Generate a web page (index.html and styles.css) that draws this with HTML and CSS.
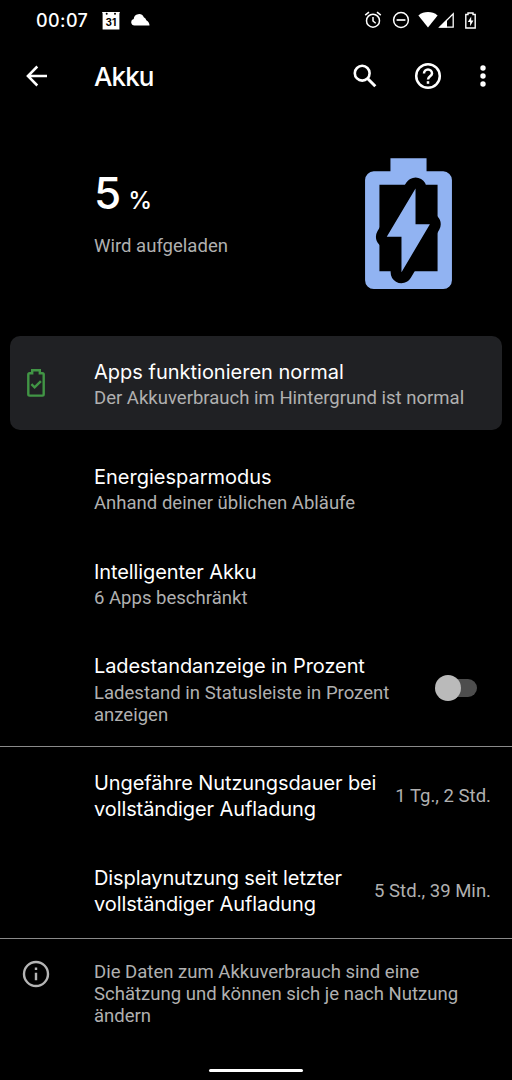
FILE: index.html
```
<!DOCTYPE html>
<html lang="de">
<head>
    <meta charset="UTF-8">
    <title>Akku</title>
    <link rel="stylesheet" href="styles.css">
</head>
<body>
    <div class="screen">
        <div class="status-bar">
            <span class="clock">00:07</span>
            <svg class="calendar-icon" width="18" height="19" viewBox="0 0 18 19">
                <path d="M0 1h18l-.6 1.5V18.5H.6V2.500z" fill="#fff"/>
                <circle cx="4.700" cy="2.700" r="1" fill="#000"/>
                <circle cx="13" cy="2.700" r="1" fill="#000"/>
                <text class="calendar-day" x="9" y="14.600" text-anchor="middle">31</text>
            </svg>
            <svg class="cloud-icon" width="19" height="12" viewBox="0 0 19 12">
                <path d="M3.500 11.500A3.300 3.300 0 0 1 2.700 5 5.300 5.300 0 0 1 12.800 3.200 4 4 0 0 1 15.300 6.200Q18.500 8 18.500 11.500z" fill="#fff"/>
            </svg>
            <div class="status-icons">
                <svg class="alarm-icon" width="18" height="18" viewBox="0 0 18 18" fill="none" stroke="#fff" stroke-width="1.500">
                    <circle cx="9" cy="9.700" r="6.500"/>
                    <path d="M9 6v4l2.700 2.300M1.200 4.200l3.800-3M16.800 4.200l-3.800-3"/>
                </svg>
                <svg class="dnd-icon" width="18" height="18" viewBox="0 0 18 18" fill="none" stroke="#fff" stroke-width="1.500">
                    <circle cx="9" cy="9" r="7.400"/>
                    <path d="M4.600 9h8.800" stroke-width="1.700"/>
                </svg>
                <svg class="wifi-icon" width="20" height="16" viewBox="0 0 20 16">
                    <path d="M.4 3.400C6-1 14-1 19.600 3.400L10 15.600z" fill="#fff"/>
                </svg>
                <svg class="signal-icon" width="16" height="16" viewBox="0 0 16 16">
                    <path d="M1.700 15.200L15.200 1.700V15.200z" fill="none" stroke="#fff" stroke-width="1.300"/>
                    <path d="M1 15.500L9 7.500V15.500z" fill="#fff"/>
                </svg>
                <svg class="charging-icon" width="11" height="17" viewBox="0 0 11 17">
                    <path d="M3 1h5v1.500h2.200V16H.8V2.500H3z" fill="none" stroke="#fff" stroke-width="1.400"/>
                    <path d="M6.200 4.500L2.800 10h2.300v4.200L8.400 8.600H6.200z" fill="#fff"/>
                </svg>
            </div>
        </div>

        <div class="toolbar">
            <svg class="back-icon" width="22" height="22" viewBox="0 0 22 22" fill="none" stroke="#fff" stroke-width="2.500">
                <path d="M21 11H2.500M11.300 1.500L1.900 11l9.400 9.500"/>
            </svg>
            <h1>Akku</h1>
            <svg class="search-icon" width="24" height="24" viewBox="0 0 24 24" fill="none" stroke="#fff" stroke-width="2.600">
                <circle cx="9.200" cy="9.200" r="7.400"/>
                <path d="M14.300 14.300l8 8" stroke-width="3"/>
            </svg>
            <svg class="help-icon" width="28" height="28" viewBox="0 0 28 28" fill="none" stroke="#fff" stroke-width="2.500">
                <circle cx="14" cy="14" r="11.800"/>
                <path d="M10 11.500a4 4 0 0 1 8 0c0 2.700-4 3-4 6"/>
                <path d="M14 19.200v2.600"/>
            </svg>
            <svg class="more-icon" width="6" height="22" viewBox="0 0 6 22" fill="#fff">
                <circle cx="3" cy="3" r="2.700"/>
                <circle cx="3" cy="11" r="2.700"/>
                <circle cx="3" cy="19" r="2.700"/>
            </svg>
        </div>

        <div class="battery-header">
            <div class="battery-info">
                <div class="level">5<span class="percent">%</span></div>
                <div class="charging-state">Wird aufgeladen</div>
            </div>
            <svg class="battery-icon" width="87" height="131" viewBox="46 39 260 392">
                <path d="M122 40h108v39h50a26 26 0 0 1 26 26v300a26 26 0 0 1-26 26H72a26 26 0 0 1-26-26V105a26 26 0 0 1 26-26h50z" fill="#91b3f2"/>
                <path d="M89 119h174v259H89z"/>
                <path d="M197 130v107h43L155 381V275h-44z" stroke="#000" stroke-width="65" stroke-linejoin="round"/>
                <path d="M197 130v107h43L155 381V275h-44z" fill="#91b3f2"/>
            </svg>
        </div>

        <div class="card">
            <div class="row-icon">
                <svg width="18" height="28" viewBox="0 0 18 28" fill="none" stroke="#419545" stroke-width="2.400">
                    <path d="M5.200 1.300h7.600v3h2.600q1.300 0 1.300 1.300v19.700q0 1.300-1.300 1.300H2.600q-1.300 0-1.300-1.300V5.600q0-1.300 1.300-1.300h2.600z"/>
                    <path d="M4.400 15.200l3.200 3.200 6.300-6.300"/>
                </svg>
            </div>
            <div class="row-text">
                <div class="title">Apps funktionieren normal</div>
                <div class="summary">Der Akkuverbrauch im Hintergrund ist normal</div>
            </div>
        </div>

        <div class="row">
            <div class="row-text">
                <div class="title">Energiesparmodus</div>
                <div class="summary">Anhand deiner üblichen Abläufe</div>
            </div>
        </div>
        <div class="row">
            <div class="row-text">
                <div class="title tight">Intelligenter Akku</div>
                <div class="summary">6 Apps beschränkt</div>
            </div>
        </div>
        <div class="row row-switch">
            <div class="row-text">
                <div class="title tight">Ladestandanzeige in Prozent</div>
                <div class="summary">Ladestand in Statusleiste in Prozent<br>anzeigen</div>
            </div>
            <div class="switch"><div class="thumb"></div></div>
        </div>

        <div class="usage">
            <div class="usage-row">
                <div class="title tight">Ungefähre Nutzungsdauer bei<br>vollständiger Aufladung</div>
                <div class="value">1 Tg., 2 Std.</div>
            </div>
            <div class="usage-row">
                <div class="title tight">Displaynutzung seit letzter<br>vollständiger Aufladung</div>
                <div class="value">5 Std., 39 Min.</div>
            </div>
        </div>

        <div class="footer">
            <svg class="info-icon" width="28" height="28" viewBox="0 0 28 28" fill="none" stroke="#b5b5b5" stroke-width="2.400">
                <circle cx="14" cy="14" r="12"/>
                <path d="M14 12.700v7.600M14 7.500v2.600"/>
            </svg>
            <div class="summary">Die Daten zum Akkuverbrauch sind eine<br>Schätzung und können sich je nach Nutzung<br>ändern</div>
        </div>

        <div class="home-bar"></div>
    </div>
</body>
</html>
```
FILE: styles.css
```
* {
    margin: 0;
    padding: 0;
    box-sizing: border-box;
}

body {
    background-color: #000;
    color: #fff;
    font-family: Roboto, sans-serif;
}

svg {
    display: block;
    flex-shrink: 0;
}

.screen {
    width: 512px;
    height: 1080px;
    display: flex;
    flex-direction: column;
    overflow: hidden;
}

/* Status bar */
.status-bar {
    height: 40px;
    padding: 0 36px;
    display: flex;
    align-items: center;
    font-family: Inter, sans-serif;
}

.clock {
    width: 66px;
    font-size: 18px;
    font-weight: 500;
    line-height: 20px;
    letter-spacing: 0.4px;
    padding-top: 2px;
}

.calendar-day {
    font-size: 10px;
    font-weight: 700;
}

.cloud-icon {
    margin-left: 11px;
}

.status-icons {
    display: flex;
    align-items: center;
    margin-left: auto;
}

.dnd-icon {
    margin-left: 10px;
}

.wifi-icon {
    margin-left: 8px;
}

.charging-icon {
    margin-left: 11px;
}

/* Toolbar */
.toolbar {
    height: 72px;
    padding: 0 26px;
    display: flex;
    align-items: center;
}

.toolbar h1 {
    margin-left: 46px;
    margin-right: auto;
    padding-top: 2px;
    font-family: Inter, sans-serif;
    font-size: 26px;
    font-weight: 500;
    line-height: 32px;
    letter-spacing: -0.9px;
}

.help-icon {
    margin: 0 38px 0 37px;
}

/* Battery level */
.battery-header {
    height: 224px;
    padding: 46px 60px 0 94px;
    display: flex;
    justify-content: space-between;
}

.battery-info {
    padding-top: 8px;
}

.level {
    font-family: Inter, sans-serif;
    font-size: 44px;
    font-weight: 500;
    line-height: 54px;
}

.percent {
    margin-left: 7px;
    font-size: 24px;
}

.charging-state {
    margin-top: 7px;
    font-size: 18.55px;
    line-height: 22px;
    color: #b0b0b0;
}

/* Preference rows */
.card {
    height: 94px;
    margin: 0 10px 11px;
    display: flex;
    align-items: center;
    border-radius: 10px;
    background-color: #202124;
}

.card .row-text {
    padding-top: 2px;
}

.row-icon {
    width: 84px;
    padding-left: 17px;
}

.row {
    height: 94.7px;
    padding: 23px 35px 0 94px;
    display: flex;
    justify-content: space-between;
}

.row-switch {
    height: 115.6px;
}

.title {
    font-family: Inter, sans-serif;
    font-size: 20px;
    line-height: 26px;
    white-space: nowrap;
}

.title.tight {
    letter-spacing: -0.1px;
}

.summary {
    padding-top: 2px;
    font-size: 18.55px;
    line-height: 22px;
    color: #b0b0b0;
    white-space: nowrap;
}

.row-switch .summary {
    padding-top: 3px;
}

.switch {
    width: 38px;
    height: 18px;
    margin-top: 26px;
    display: flex;
    align-items: center;
    border-radius: 9px;
    background-color: #4d4d4d;
}

.thumb {
    width: 26px;
    height: 26px;
    margin-left: -4px;
    flex-shrink: 0;
    border-radius: 50%;
    background-color: #bababa;
}

/* Usage since last full charge */
.usage {
    border-top: 1px solid #8a8a8a;
    border-bottom: 1px solid #8a8a8a;
}

.usage-row {
    height: 95.5px;
    padding: 2px 21px 0 94px;
    display: flex;
    align-items: center;
    justify-content: space-between;
}

.value {
    font-size: 18.55px;
    line-height: 22px;
    color: #b0b0b0;
    white-space: nowrap;
}

/* Footer note */
.footer {
    padding: 21px 22px 0;
    display: flex;
    gap: 44px;
}

.footer .summary {
    padding-top: 1.5px;
}

.home-bar {
    width: 94px;
    height: 3px;
    margin: auto auto 8px;
    border-radius: 2px;
    background-color: #fff;
}
```
